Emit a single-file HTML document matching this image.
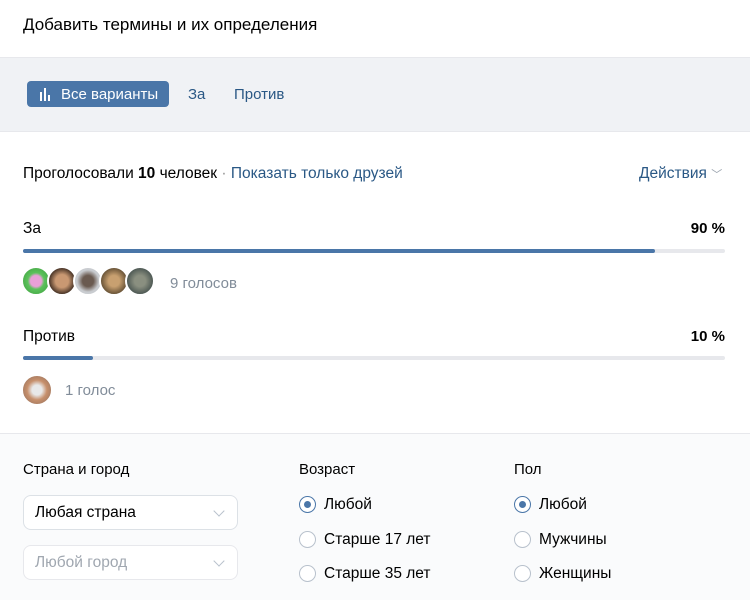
<!DOCTYPE html>
<html><head><meta charset="utf-8"><style>
*{margin:0;padding:0;box-sizing:border-box}
body{width:750px;height:600px;overflow:hidden;font-family:"Liberation Sans",sans-serif;font-size:15.5px;color:#000;background:#fff;position:relative}
.a{position:absolute}
.blue{color:#2a5885}
.bar{position:absolute;left:23px;width:702px;height:4px;background:#e7e8ec;border-radius:2px}
.bar i{display:block;height:4px;background:#4a76a8;border-radius:2px}
.av{position:absolute;width:30px;height:30px;border-radius:50%;border:2px solid #fff}
.sel{position:absolute;left:23px;width:215px;height:35px;border:1px solid #dce1e6;border-radius:8px;background:#fff;padding:8px 11px;font-size:15.5px}
.sel:after{content:"";position:absolute;right:14px;top:11px;width:7px;height:7px;border-right:1.5px solid #b8c1cc;border-bottom:1.5px solid #b8c1cc;transform:rotate(45deg)}
.r{position:absolute;width:17px;height:17px;border-radius:50%;border:1.5px solid #b8c1cc;background:#fff}
.r.on{border-color:#4a76a8}
.r.on:after{content:"";position:absolute;left:3.5px;top:3.5px;width:7px;height:7px;border-radius:50%;background:#4a76a8}
.rl{position:absolute;font-size:15.5px}
</style></head><body>
<div class="a" style="left:0;top:0;width:750px;height:58px;border-bottom:1px solid #e7e8ec"></div>
<div class="a" style="left:23px;top:15px;font-size:17px">Добавить термины и их определения</div>
<div class="a" style="left:0;top:58px;width:750px;height:74px;background:#f0f2f5;border-bottom:1px solid #e7e8ec"></div>
<div class="a" style="left:27px;top:81px;width:142px;height:26px;background:#4a76a8;border-radius:4px;color:#fff;font-size:15px;padding:5px 0 0 34px;white-space:nowrap">Все варианты</div>
<div class="a" style="left:40px;top:92px;width:2px;height:9px;background:#fff"></div>
<div class="a" style="left:44px;top:88px;width:2px;height:13px;background:#fff"></div>
<div class="a" style="left:48px;top:95px;width:2px;height:6px;background:#fff"></div>
<div class="a blue" style="left:188px;top:86px;font-size:15px">За</div>
<div class="a blue" style="left:234px;top:86px;font-size:15px">Против</div>
<div class="a" style="left:23px;top:165px;font-size:15.5px;white-space:nowrap">Проголосовали <b>10</b> человек <span style="color:#939393">·</span> <span class="blue">Показать только друзей</span></div>
<div class="a blue" style="left:639px;top:165px;font-size:15.5px;white-space:nowrap">Действия <span style="color:#99a2ad;font-size:11px">﹀</span></div>
<div class="a" style="left:23px;top:220px">За</div>
<div class="a" style="right:25px;top:220px;font-weight:bold;font-size:15px">90 %</div>
<div class="bar" style="top:249px"><i style="width:632px"></i></div>
<div class="av" style="left:21px;top:266px;background:radial-gradient(#e9a0d8 30%,#5cc25c 45%,#3b9b3b)"></div>
<div class="av" style="left:47px;top:266px;background:radial-gradient(#c99872 35%,#4a3527 70%)"></div>
<div class="av" style="left:73px;top:266px;background:radial-gradient(#6a5a50 30%,#c9ccd0 60%)"></div>
<div class="av" style="left:99px;top:266px;background:radial-gradient(#c8a070 30%,#6b5538 70%)"></div>
<div class="av" style="left:125px;top:266px;background:radial-gradient(#8a8f80 30%,#4f5a55 70%)"></div>
<div class="a" style="left:170px;top:275px;color:#818c99;font-size:15px">9 голосов</div>
<div class="a" style="left:23px;top:328px">Против</div>
<div class="a" style="right:25px;top:328px;font-weight:bold;font-size:15px">10 %</div>
<div class="bar" style="top:356px"><i style="width:70px"></i></div>
<div class="av" style="left:21px;top:374px;width:32px;height:32px;background:radial-gradient(#e8e8e8 25%,#c7906c 50%,#8a6a5a)"></div>
<div class="a" style="left:65px;top:382px;color:#818c99;font-size:15px">1 голос</div>
<div class="a" style="left:0;top:433px;width:750px;height:167px;background:#fafbfc;border-top:1px solid #e7e8ec"></div>
<div class="a" style="left:23px;top:461px;font-size:15px">Страна и город</div>
<div class="a" style="left:299px;top:461px;font-size:15px">Возраст</div>
<div class="a" style="left:514px;top:461px;font-size:15px">Пол</div>
<div class="sel" style="top:495px">Любая страна</div>
<div class="sel" style="top:545px;color:#a0a7b0;border-color:#e7e8ec">Любой город</div>
<div class="r on" style="left:299px;top:496px"></div><div class="rl" style="left:324px;top:496px">Любой</div>
<div class="r" style="left:299px;top:531px"></div><div class="rl" style="left:324px;top:531px">Старше 17 лет</div>
<div class="r" style="left:299px;top:565px"></div><div class="rl" style="left:324px;top:565px">Старше 35 лет</div>
<div class="r on" style="left:514px;top:496px"></div><div class="rl" style="left:539px;top:496px">Любой</div>
<div class="r" style="left:514px;top:531px"></div><div class="rl" style="left:539px;top:531px">Мужчины</div>
<div class="r" style="left:514px;top:565px"></div><div class="rl" style="left:539px;top:565px">Женщины</div>
</body></html>
